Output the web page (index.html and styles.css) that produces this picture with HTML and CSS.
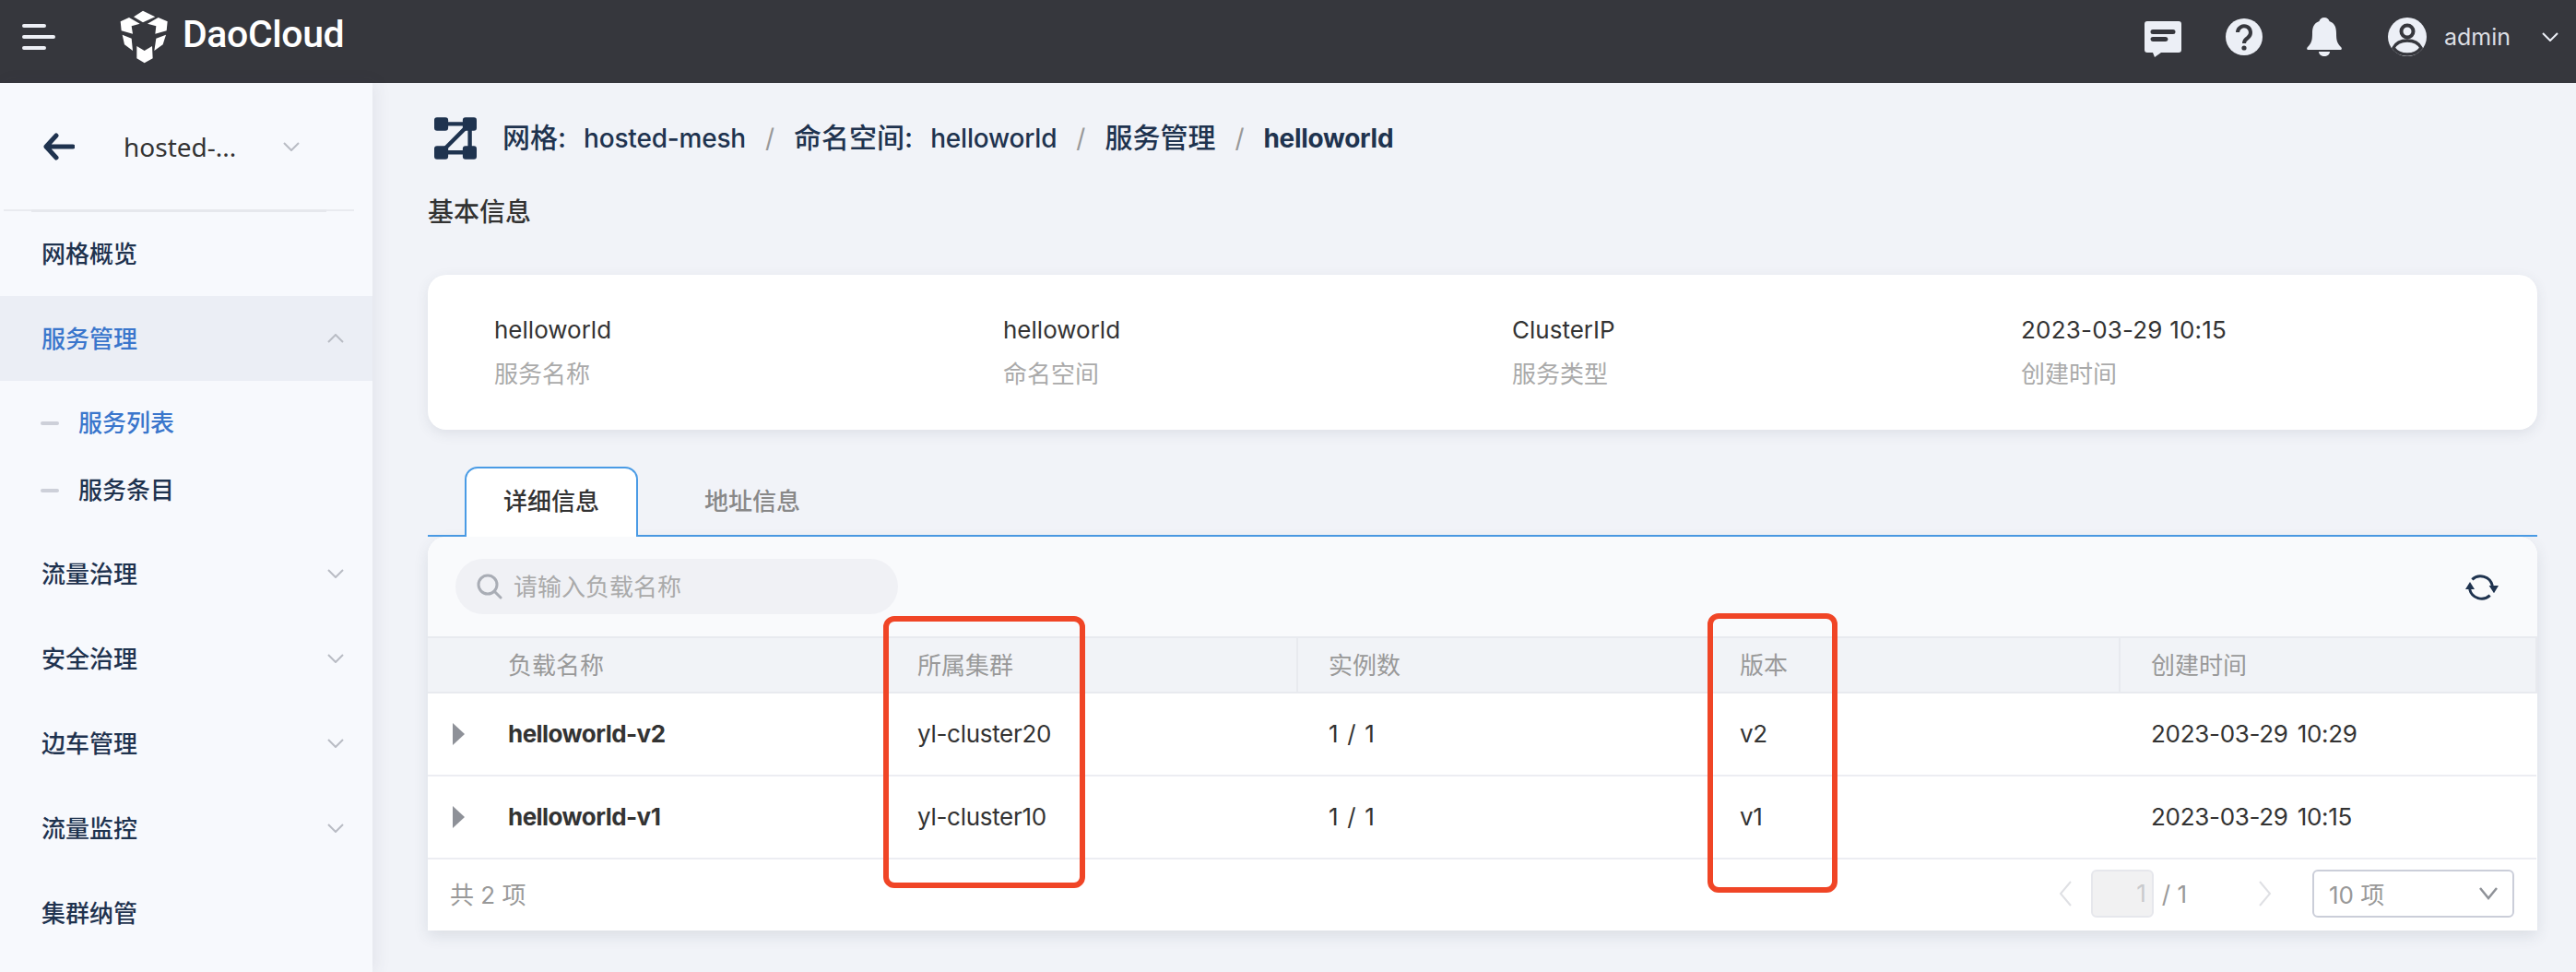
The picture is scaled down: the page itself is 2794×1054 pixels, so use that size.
FILE: index.html
```html
<!DOCTYPE html>
<html lang="zh-CN">
<head>
    <meta charset="UTF-8">
    <title>helloworld</title>
    <link rel="stylesheet" href="styles.css">
</head>
<body>
    <header class="topbar">
        <svg class="hamburger" viewBox="0 0 36 28"><path d="M2 2h22M2 14h32M2 26h22" fill="none" stroke="#eef0f6" stroke-width="4" stroke-linecap="round"/></svg>
        <svg class="logo" viewBox="0 0 240 210" fill="#fff"><path d="M105 20l40 20-40 18-30-18z"/><path d="M32 55l28-13 35 20-27 8 4 25-37-10z"/><path d="M185 55l-30-13-35 20 28 8-3 25 37-10z"/><path d="M38 98l30 12 4 40-27-20z"/><path d="M180 98l-32 12-6 40 28-20z"/><path d="M85 135l25 15 25-15 2 40-27 15-25-15z"/></svg>
        <span class="brand">DaoCloud</span>
        <div class="topbar-right">
            <svg class="top-icon chat" viewBox="0 0 40 40" fill="#eceff6"><path fill-rule="evenodd" d="M3 1h34a3 3 0 0 1 3 3v28a3 3 0 0 1-3 3H18l-7 5-2-5H3a3 3 0 0 1-3-3V4a3 3 0 0 1 3-3zM9 10a2 2 0 0 0 0 5h22a2 2 0 0 0 0-5zM9 18a2 2 0 0 0 0 5h14a2 2 0 0 0 0-5z"/></svg>
            <svg class="top-icon help" viewBox="0 0 40 40"><circle cx="20" cy="20" r="20" fill="#eceff6"/><path d="M13 15a7 7 0 1 1 11 6c-3 2-4 3-4 6" fill="none" stroke="#36373d" stroke-width="4"/><circle cx="20" cy="32" r="2.6" fill="#36373d"/></svg>
            <svg class="top-icon bell" viewBox="0 0 38 42" fill="#eceff6"><path d="M19 0c3 0 5 2 5.500 4 6 2 7.500 7 7.500 13 0 8 1 11 5 15 1.500 1.500 1 3-1 3H2c-2 0-2.500-1.500-1-3 4-4 5-7 5-15 0-6 1.500-11 7.500-13C14 2 16 0 19 0z"/><path d="M13 37h12c0 3-3 5-6 5s-6-2-6-5z"/></svg>
            <svg class="top-icon user" viewBox="0 0 42 42"><circle cx="21" cy="21" r="21" fill="#eceff6"/><circle cx="21" cy="15" r="6.500" fill="none" stroke="#36373d" stroke-width="4"/><path d="M6 33c3-6 9-8 15-8s12 2 15 8c-3 4-9 7-15 7S9 37 6 33z" fill="none" stroke="#36373d" stroke-width="3.500"/></svg>
            <span class="user-name">admin</span>
            <svg class="top-chevron" viewBox="0 0 18 10"><path d="M1 1l8 8 8-8" fill="none" stroke="#eceff6" stroke-width="2"/></svg>
        </div>
    </header>

    <div class="layout">
        <aside class="sidebar">
            <div class="mesh-select">
                <svg class="back-arrow" viewBox="0 0 34 30"><path d="M14 3L3 15l11 12M3 15h29" fill="none" stroke="#1f334f" stroke-width="5" stroke-linecap="round" stroke-linejoin="round"/></svg>
                <span class="mesh-name">hosted-...</span>
                <svg class="chevron" viewBox="0 0 18 10"><path d="M1 1l8 8 8-8" fill="none" stroke="#b9bcc4" stroke-width="2"/></svg>
            </div>
            <div class="side-divider"></div>
            <nav>
                <a class="nav-item"><span>网格概览</span></a>
                <a class="nav-item nav-open"><span>服务管理</span>
                    <svg class="chevron" viewBox="0 0 18 10"><path d="M1 9l8-8 8 8" fill="none" stroke="#b9bcc4" stroke-width="2"/></svg>
                </a>
                <div class="sub-list">
                    <a class="sub-item sub-active"><span>服务列表</span></a>
                    <a class="sub-item"><span>服务条目</span></a>
                </div>
                <a class="nav-item"><span>流量治理</span>
                    <svg class="chevron" viewBox="0 0 18 10"><path d="M1 1l8 8 8-8" fill="none" stroke="#b9bcc4" stroke-width="2"/></svg>
                </a>
                <a class="nav-item"><span>安全治理</span>
                    <svg class="chevron" viewBox="0 0 18 10"><path d="M1 1l8 8 8-8" fill="none" stroke="#b9bcc4" stroke-width="2"/></svg>
                </a>
                <a class="nav-item"><span>边车管理</span>
                    <svg class="chevron" viewBox="0 0 18 10"><path d="M1 1l8 8 8-8" fill="none" stroke="#b9bcc4" stroke-width="2"/></svg>
                </a>
                <a class="nav-item"><span>流量监控</span>
                    <svg class="chevron" viewBox="0 0 18 10"><path d="M1 1l8 8 8-8" fill="none" stroke="#b9bcc4" stroke-width="2"/></svg>
                </a>
                <a class="nav-item"><span>集群纳管</span></a>
            </nav>
        </aside>

        <main class="content">
            <div class="breadcrumb">
                <svg class="mesh-icon" viewBox="33 22 137 135"><g fill="#1f334f"><rect x="33" y="22" width="45" height="43" rx="9"/><rect x="125" y="22" width="45" height="43" rx="9"/><rect x="33" y="114" width="45" height="43" rx="9"/><rect x="125" y="114" width="45" height="43" rx="9"/></g><path d="M70 43h65M70 135h65M135 55L65 125M148 60v60" fill="none" stroke="#1f334f" stroke-width="13"/></svg>
                <span class="crumb-cjk">网格:</span><span class="crumb-val">hosted-mesh</span>
                <span class="crumb-sep">/</span>
                <span class="crumb-cjk">命名空间:</span><span class="crumb-val">helloworld</span>
                <span class="crumb-sep">/</span>
                <span class="crumb-cjk">服务管理</span>
                <span class="crumb-sep">/</span>
                <span class="crumb-last">helloworld</span>
            </div>
            <h2 class="section-title">基本信息</h2>

            <section class="info-card">
                <div class="info-col"><div class="info-val">helloworld</div><div class="info-label">服务名称</div></div>
                <div class="info-col"><div class="info-val">helloworld</div><div class="info-label">命名空间</div></div>
                <div class="info-col"><div class="info-val">ClusterIP</div><div class="info-label">服务类型</div></div>
                <div class="info-col"><div class="info-val date">2023-03-29 10:15</div><div class="info-label">创建时间</div></div>
            </section>

            <div class="tabs">
                <div class="tab tab-active">详细信息</div>
                <div class="tab">地址信息</div>
            </div>

            <section class="panel">
                <div class="toolbar">
                    <div class="search">
                        <svg class="search-icon" viewBox="0 0 28 28"><circle cx="12" cy="12" r="10" fill="none" stroke="#a9adb5" stroke-width="3"/><path d="M19 19l7 7" stroke="#a9adb5" stroke-width="3" stroke-linecap="round"/></svg>
                        <span>请输入负载名称</span>
                    </div>
                    <svg class="refresh" viewBox="0 0 180 150"><path d="M64 52A40 40 0 0 1 130 72M122 104A40 40 0 0 1 56 84" fill="none" stroke="#1f334f" stroke-width="9"/><path d="M119 72h31l-15 25zM42 84h30L57 60z" fill="#1f334f"/></svg>
                </div>
                <table class="table">
                    <thead>
                        <tr>
                            <th class="col-name"><span>负载名称</span></th>
                            <th><span>所属集群</span></th>
                            <th><span>实例数</span></th>
                            <th><span>版本</span></th>
                            <th><span>创建时间</span></th>
                        </tr>
                    </thead>
                    <tbody>
                        <tr>
                            <td class="col-name"><span class="caret"></span><b>helloworld-v2</b></td>
                            <td>yl-cluster20</td>
                            <td>1 / 1</td>
                            <td>v2</td>
                            <td>2023-03-29 10:29</td>
                        </tr>
                        <tr>
                            <td class="col-name"><span class="caret"></span><b>helloworld-v1</b></td>
                            <td>yl-cluster10</td>
                            <td>1 / 1</td>
                            <td>v1</td>
                            <td>2023-03-29 10:15</td>
                        </tr>
                    </tbody>
                </table>
                <div class="pager">
                    <span class="total">共 2 项</span>
                    <div class="pager-right">
                        <svg class="page-arrow" viewBox="0 0 14 28"><path d="M13 1L2 14l11 13" fill="none" stroke="#dfe0e4" stroke-width="2"/></svg>
                        <span class="page-input">1</span>
                        <span class="page-total">/ 1</span>
                        <svg class="page-arrow next" viewBox="0 0 14 28"><path d="M1 1l11 13L1 27" fill="none" stroke="#dfe0e4" stroke-width="2"/></svg>
                        <div class="page-size">
                            <span>10 项</span>
                            <svg class="chevron" viewBox="0 0 20 14"><path d="M1 1l9 11 9-11" fill="none" stroke="#8f9298" stroke-width="2.500"/></svg>
                        </div>
                    </div>
                </div>
            </section>
        </main>
    </div>

    <div class="mark mark-cluster"></div>
    <div class="mark mark-version"></div>
</body>
</html>
```

FILE: styles.css
```css
* {
    box-sizing: border-box;
}
html, body {
    margin: 0;
    height: 100%;
    overflow: hidden;
}
body {
    font-family: Inter, "Noto Sans CJK SC", sans-serif;
    font-size: 26px;
    color: #333;
    background-color: #f1f3f8;
}

/* top bar */
.topbar {
    height: 90px;
    background-color: #36373d;
    display: flex;
    align-items: center;
    padding: 0 0 10px 24px;
    color: #eceff6;
}
.hamburger {
    width: 36px;
    height: 28px;
}
.logo {
    width: 80px;
    height: 70px;
    margin-left: 60px;
}
.brand {
    margin-left: -2px;
    margin-bottom: 6px;
    font-family: Roboto, sans-serif;
    font-size: 41px;
    letter-spacing: -0.4px;
    font-weight: 500;
    color: #fff;
}
.topbar-right {
    margin-left: auto;
    display: flex;
    align-items: center;
    padding-right: 19px;
}
.top-icon {
    width: 40px;
    height: 40px;
    margin-right: 48px;
}
.top-icon.chat {
    margin-top: 4px;
}
.top-icon.bell {
    width: 38px;
    height: 42px;
    margin-right: 50px;
}
.top-icon.user {
    width: 42px;
    height: 42px;
    margin-right: 19px;
}
.user-name {
    font-size: 25px;
    color: #dcdee3;
}
.top-chevron {
    width: 18px;
    height: 10px;
    margin-left: 34px;
}

/* sidebar */
.layout {
    display: flex;
    height: 964px;
}
.sidebar {
    width: 404px;
    flex-shrink: 0;
    background-color: #f7f9fd;
    box-shadow: 4px 0 16px rgba(60, 70, 90, 0.08);
}
.mesh-select {
    height: 137px;
    display: flex;
    align-items: center;
    padding-left: 47px;
}
.back-arrow {
    width: 34px;
    height: 30px;
}
.mesh-name {
    margin-left: 53px;
    width: 173px;
    font-size: 28px;
    font-family: "Noto Sans", sans-serif;
}
.chevron {
    width: 18px;
    height: 10px;
}
.side-divider {
    height: 2px;
    margin: 1px 20px 0 4px;
    background-color: #e9ebf0;
}
.side-divider::before {
    content: "";
    display: block;
    height: 3px;
    margin: -1px 30px 0;
    background-color: #e6e8ed;
}
.nav-item {
    height: 92px;
    display: flex;
    align-items: center;
    justify-content: space-between;
    padding: 0 31px 0 45px;
    font-weight: 500;
    color: #1f334f;
}
.nav-item span, .sub-item span {
    margin-bottom: 4px;
}
.nav-open {
    background-color: #ebeef5;
    color: #3a76cc;
}
.sub-list {
    padding-top: 9px;
    height: 163px;
}
.sub-item {
    height: 73px;
    display: flex;
    align-items: center;
    padding-left: 44px;
    font-weight: 500;
    color: #1f334f;
}
.sub-item::before {
    content: "";
    width: 20px;
    height: 4px;
    border-radius: 2px;
    margin-right: 21px;
    background-color: #cdd0d9;
}
.sub-active {
    color: #3a76cc;
}

/* main */
.content {
    flex: 1;
    padding: 0 42px 0 60px;
}
.breadcrumb {
    height: 46px;
    margin-top: 37px;
    margin-left: -4px;
    padding-left: 11px;
    display: flex;
    align-items: center;
    font-size: 28px;
    font-weight: 500;
    color: #1f334f;
}
.mesh-icon {
    width: 46px;
    height: 46px;
    margin-right: 28px;
    flex-shrink: 0;
}
.crumb-cjk {
    font-size: 30px;
    line-height: 40px;
    margin-top: -3px;
}
.crumb-val {
    margin-left: 19px;
    letter-spacing: -0.2px;
}
.crumb-sep {
    margin: 0 21px;
    color: #999;
    font-weight: 400;
}
.crumb-last {
    font-weight: 700;
    letter-spacing: -0.3px;
}
.section-title {
    margin: 37px 0 0;
    height: 40px;
    line-height: 40px;
    font-size: 28px;
    font-weight: 500;
    color: #333;
}
.info-card {
    margin-top: 48px;
    height: 168px;
    display: flex;
    align-items: center;
    padding-left: 72px;
    background-color: #fff;
    border-radius: 20px;
    box-shadow: 0 4px 14px rgba(60, 70, 90, 0.1);
}
.info-col {
    width: 552px;
}
.info-val {
    line-height: 36px;
}
.info-val.date {
    letter-spacing: 0.2px;
}
.info-label {
    margin-top: 12px;
    line-height: 36px;
    color: #aaa;
}
.tabs {
    margin-top: 40px;
    height: 76px;
    display: flex;
    padding-left: 40px;
    border-bottom: 2px solid #4a9be5;
}
.tab {
    width: 188px;
    height: 76px;
    line-height: 72px;
    text-align: center;
    color: #888;
    font-weight: 500;
    border: 2px solid transparent;
    border-bottom: none;
    border-radius: 14px 14px 0 0;
}
.tab-active {
    color: #333;
    background-color: #fff;
    border-color: #4a9be5;
    margin-right: 30px;
}
.panel {
    height: 427px;
    background-color: #fff;
    border-radius: 20px 20px 0 0;
    box-shadow: 0 6px 16px rgba(60, 70, 90, 0.12);
    overflow: hidden;
}
.toolbar {
    height: 108px;
    display: flex;
    align-items: center;
    justify-content: space-between;
    padding: 0 32px 0 30px;
    background-color: #f9fafc;
}
.search {
    width: 480px;
    height: 60px;
    display: flex;
    align-items: center;
    padding-left: 23px;
    border-radius: 30px;
    background-color: #f0f1f5;
    color: #aaa;
}
.search span {
    margin-bottom: 3px;
}
.search-icon {
    width: 28px;
    height: 28px;
    margin-right: 12px;
}
.refresh {
    width: 60px;
    height: 50px;
}
.table {
    width: 100%;
    table-layout: fixed;
    border-collapse: collapse;
}
th {
    height: 60px;
    padding: 0 0 0 33px;
    text-align: left;
    font-weight: 400;
    color: #999;
    background-color: #f1f3f7;
    border-top: 2px solid #e8eaef;
    border-bottom: 2px solid #e8eaef;
    border-right: 2px solid #e8eaef;
}
th span {
    position: relative;
    top: -2px;
}
td {
    height: 90px;
    padding: 0 0 2px 34px;
    letter-spacing: -0.3px;
    word-spacing: 3px;
    border-bottom: 2px solid #ecedf2;
}
th.col-name, td.col-name {
    width: 497px;
    padding-left: 87px;
    position: relative;
}
th:nth-child(2), th:nth-child(3), th:nth-child(4) {
    width: 446px;
}
b {
    font-weight: 700;
    letter-spacing: -0.55px;
}
.caret {
    position: absolute;
    left: 27px;
    top: 32px;
    border-left: 13px solid #8e9198;
    border-top: 12px solid transparent;
    border-bottom: 12px solid transparent;
}
.pager {
    height: 76px;
    display: flex;
    align-items: center;
    justify-content: space-between;
    padding: 0 25px 2px 24px;
    color: #999;
}
.total {
    margin-bottom: 2px;
}
.pager-right {
    display: flex;
    align-items: center;
}
.page-arrow {
    width: 14px;
    height: 28px;
}
.page-arrow.next {
    margin-left: 78px;
}
.page-input {
    width: 68px;
    height: 52px;
    margin-left: 21px;
    padding-right: 6px;
    line-height: 48px;
    text-align: right;
    color: #c9cacd;
    background-color: #f1f1f2;
    border: 2px solid #e6e7ec;
    border-radius: 6px;
}
.page-total {
    margin-left: 9px;
}
.page-size {
    width: 219px;
    height: 52px;
    margin-left: 44px;
    padding: 0 16px;
    display: flex;
    align-items: center;
    justify-content: space-between;
    border: 2px solid #cbced9;
    border-radius: 6px;
}
.page-size span {
    margin-bottom: 2px;
}
.page-size .chevron {
    width: 20px;
    height: 14px;
}

/* red annotation boxes drawn over the screenshot */
.mark {
    position: absolute;
    border: 6px solid #f04526;
    border-radius: 12px;
}
.mark-cluster {
    left: 958px;
    top: 668px;
    width: 219px;
    height: 295px;
}
.mark-version {
    left: 1852px;
    top: 665px;
    width: 141px;
    height: 303px;
}
```
